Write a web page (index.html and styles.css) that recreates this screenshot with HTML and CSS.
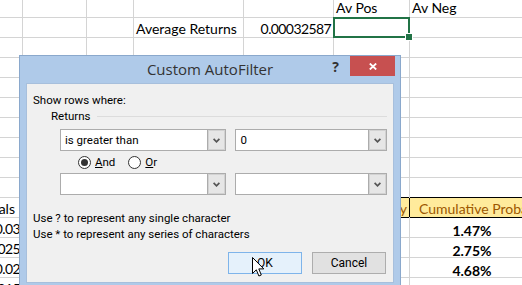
FILE: index.html
```html
<!DOCTYPE html>
<html lang="en">
<head>
    <meta charset="UTF-8">
    <title>Custom AutoFilter</title>
    <link rel="stylesheet" href="styles.css">
</head>
<body>
    <!-- Planilha ao fundo -->
    <div class="sheet">
        <div></div><div></div><div></div><div></div><div></div><div class="cell">Av Pos</div><div class="cell">Av Neg</div>
        <div></div><div></div><div></div><div class="cell">Average Returns</div><div class="cell num">0.00032587</div><div class="cell selected"></div><div></div>
        <div></div><div></div><div></div><div></div><div></div><div></div><div></div>
        <div></div><div></div><div></div><div></div><div></div><div></div><div></div>
        <div></div><div></div><div></div><div></div><div></div><div></div><div></div>
        <div></div><div></div><div></div><div></div><div></div><div></div><div></div>
        <div></div><div></div><div></div><div></div><div></div><div></div><div></div>
        <div></div><div></div><div></div><div></div><div></div><div></div><div></div>
        <div></div><div></div><div></div><div></div><div></div><div></div><div></div>
        <div></div><div></div><div></div><div></div><div></div><div></div><div></div>
        <div class="cell num label">Intervals</div><div></div><div></div><div></div><div></div><div class="cell num neutral">Frequency</div><div class="cell neutral head">Cumulative Probability</div>
        <div class="cell num">-0.03</div><div></div><div></div><div></div><div></div><div></div><div class="cell pct">1.47%</div>
        <div class="cell num">-0.025</div><div></div><div></div><div></div><div></div><div></div><div class="cell pct">2.75%</div>
        <div class="cell num">-0.02</div><div></div><div></div><div></div><div></div><div></div><div class="cell pct">4.68%</div>
        <div class="cell num">-0.015</div><div></div><div></div><div></div><div></div><div></div><div class="cell pct">7.51%</div>
    </div>

    <!-- Janela do filtro -->
    <div class="dialog">
        <div class="titlebar">
            <span class="title">Custom AutoFilter</span>
            <span class="help">?</span>
            <span class="close">
                <svg width="8" height="7" viewBox="0 0 8 7"><path d="M0.8 0.5 L7.2 6.5 M7.2 0.5 L0.8 6.5" stroke="#fff" stroke-width="1.8"/></svg>
            </span>
        </div>

        <div class="content">
            <p class="line">Show rows where:</p>
            <div class="group">
                <span>Returns</span>
                <span class="rule"></span>
            </div>

            <div class="combo-row">
                <div class="combo wide">
                    <span class="value">is greater than</span>
                    <span class="arrow"><svg width="7" height="5" viewBox="0 0 7 5"><polyline points="0.6,0.8 3.5,3.8 6.4,0.8" fill="none" stroke="#555" stroke-width="1.7"/></svg></span>
                </div>
                <div class="combo">
                    <span class="value">0</span>
                    <span class="arrow"><svg width="7" height="5" viewBox="0 0 7 5"><polyline points="0.6,0.8 3.5,3.8 6.4,0.8" fill="none" stroke="#555" stroke-width="1.7"/></svg></span>
                </div>
            </div>

            <div class="radio-row">
                <span class="radio checked"></span><span class="radio-label"><u>A</u>nd</span>
                <span class="radio"></span><span class="radio-label"><u>O</u>r</span>
            </div>

            <div class="combo-row second">
                <div class="combo wide">
                    <span class="value"></span>
                    <span class="arrow"><svg width="7" height="5" viewBox="0 0 7 5"><polyline points="0.6,0.8 3.5,3.8 6.4,0.8" fill="none" stroke="#555" stroke-width="1.7"/></svg></span>
                </div>
                <div class="combo">
                    <span class="value"></span>
                    <span class="arrow"><svg width="7" height="5" viewBox="0 0 7 5"><polyline points="0.6,0.8 3.5,3.8 6.4,0.8" fill="none" stroke="#555" stroke-width="1.7"/></svg></span>
                </div>
            </div>

            <p class="line hint">Use ? to represent any single character</p>
            <p class="line">Use * to represent any series of characters</p>

            <div class="buttons">
                <button class="btn ok">OK</button>
                <button class="btn">Cancel</button>
            </div>
        </div>
    </div>

    <!-- Ponteiro do mouse -->
    <svg class="cursor" width="13" height="21" viewBox="0 0 13 21">
        <path d="M0.5 0.5 L0.5 16.5 L4.3 12.8 L6.9 19 L9.3 18 L6.8 11.9 L11.8 11.9 Z" fill="#fff" stroke="#000" stroke-width="1"/>
    </svg>
</body>
</html>
```

FILE: styles.css
```css
/* Geral */
* {
    margin: 0;
    padding: 0;
    box-sizing: border-box;
}

body {
    width: 522px;
    height: 285px;
    overflow: hidden;
    background: #fff;
    position: relative;
    font-family: 'Lato', sans-serif;
}

/* Planilha */
.sheet {
    display: grid;
    grid-template-columns: 64px 63px 46px 109px 89px 75px 124px;
    grid-template-rows: 20px repeat(14, 19px);
    gap: 1px;
    width: max-content;
    margin-left: -42px;
    margin-top: -3px;
    background: #d4d4d4;
}

.sheet > div {
    background: #fff;
    position: relative;
}

.cell {
    font-size: 14px;
    line-height: 19px;
    padding: 1px 2px 0;
    white-space: nowrap;
    overflow: hidden;
    color: #000;
}

.cell.num {
    text-align: right;
    letter-spacing: -0.6px;
}

.cell.label {
    padding-right: 7px;
    letter-spacing: 0;
}

.cell.selected {
    overflow: visible;
    outline: 2px solid #217346;
    outline-offset: -1px;
    z-index: 2;
}

.cell.selected::after {
    content: '';
    position: absolute;
    right: -4px;
    bottom: -4px;
    width: 6px;
    height: 6px;
    background: #217346;
    border: 1px solid #fff;
}

.cell.neutral {
    background: #ffeb9c !important;
    color: #9c5700;
    letter-spacing: 0;
    box-shadow: 0 -1px 0 #000, 0 1px 0 #000, 1px 0 0 #000;
}

.cell.head {
    padding-left: 9px;
}

.cell.pct {
    text-align: center;
    font-weight: bold;
    padding-top: 3px;
}

/* Janela */
.dialog {
    position: absolute;
    left: 19px;
    top: 55px;
    width: 382px;
    height: 240px;
    background: #afcae9;
    border: 1px solid #8aa8cc;
    padding: 0 6px;
    font-family: 'Roboto', sans-serif;
    z-index: 5;
}

.titlebar {
    display: flex;
    height: 27px;
    margin: 0 -6px;
    padding-right: 5px;
}

.title {
    flex: 1;
    padding-left: 70px;
    text-align: center;
    font-family: 'Open Sans', sans-serif;
    font-size: 15px;
    line-height: 27px;
    color: #333;
}

.help {
    width: 20px;
    padding-right: 11px;
    text-align: right;
    font-family: 'Open Sans', sans-serif;
    font-size: 14px;
    font-weight: bold;
    line-height: 21px;
    color: #333;
}

.close {
    width: 45px;
    height: 20px;
    background: #c75050;
    display: flex;
    justify-content: center;
    align-items: center;
}

.content {
    height: 200px;
    background: #f0f0f0;
    border: 1px solid #a7bfdc;
    padding: 8px 6px 0;
    font-size: 11.5px;
    color: #000;
}

.line {
    line-height: 16px;
    white-space: nowrap;
}

.line.hint {
    margin-top: 15px;
}

.group {
    display: flex;
    align-items: center;
    line-height: 16px;
    padding-left: 18px;
}

.rule {
    flex: 1;
    margin-left: 7px;
    border-top: 1px solid #dcdcdc;
}

/* Combos */
.combo-row {
    display: flex;
    gap: 9px;
    margin-top: 5px;
    padding-left: 27px;
}

.combo-row.second {
    margin-top: 4px;
}

.combo {
    display: flex;
    width: 152px;
    height: 22px;
    background: #fff;
    border: 1px solid #acacac;
}

.combo.wide {
    width: 167px;
}

.value {
    flex: 1;
    padding-left: 4px;
    line-height: 20px;
}

.arrow {
    width: 18px;
    background: #e6e6e6;
    border-left: 1px solid #acacac;
    box-shadow: inset 0 0 0 1px #d2d2d2;
    display: flex;
    justify-content: center;
    align-items: center;
}

/* Radios */
.radio-row {
    display: flex;
    align-items: center;
    height: 14px;
    margin-top: 4px;
    padding-left: 45px;
}

.radio {
    width: 13px;
    height: 13px;
    border: 1px solid #333;
    border-radius: 50%;
    background: #fff;
    display: flex;
    justify-content: center;
    align-items: center;
}

.radio.checked::after {
    content: '';
    width: 7px;
    height: 7px;
    border-radius: 50%;
    background: #333;
}

.radio-label {
    margin-left: 4px;
    margin-right: 13px;
    line-height: 14px;
}

/* Botões */
.buttons {
    display: flex;
    justify-content: flex-end;
    gap: 10px;
    margin-top: 10px;
    padding-right: 1px;
}

.btn {
    width: 74px;
    height: 22px;
    font-family: 'Roboto', sans-serif;
    font-size: 12px;
    color: #000;
    background: #e1e1e1;
    border: 1px solid #adadad;
}

.btn.ok {
    background: #e5f1fb;
    border-color: #7eb4ea;
}

/* Ponteiro */
.cursor {
    position: absolute;
    left: 252px;
    top: 257px;
    z-index: 10;
}
```
